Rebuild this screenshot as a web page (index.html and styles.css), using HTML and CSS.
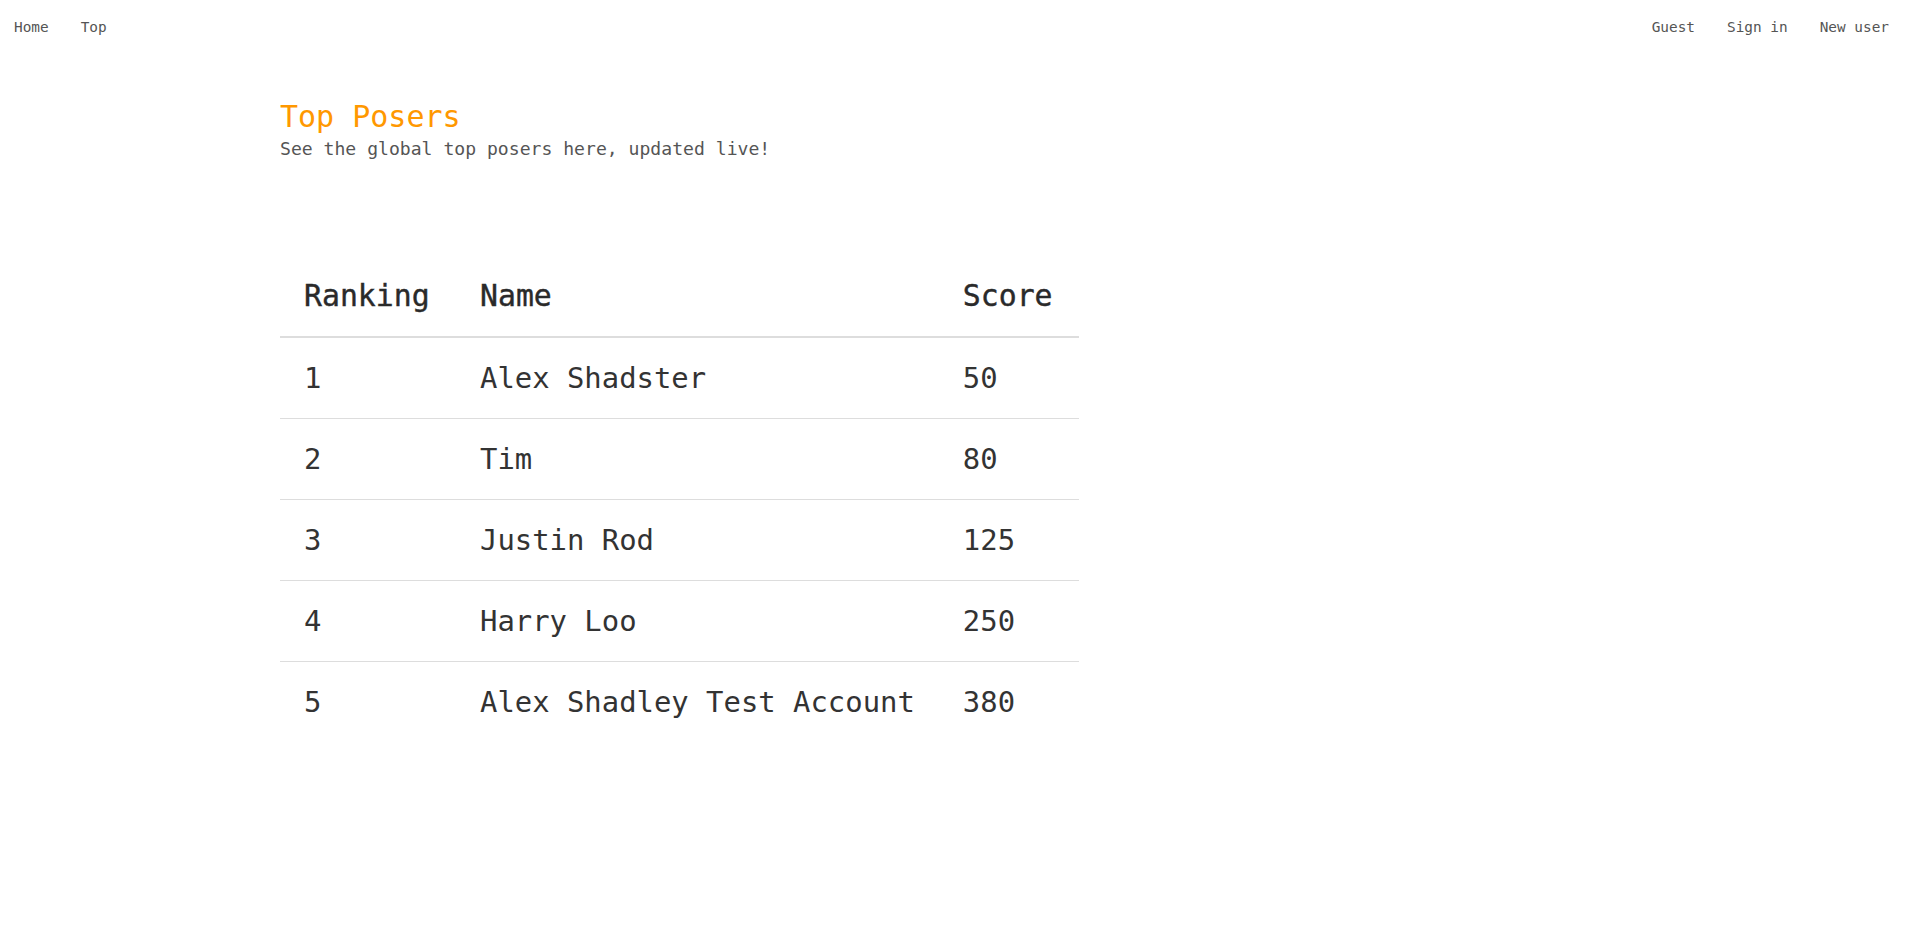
FILE: index.html
```html
<!DOCTYPE html>
<html lang="en">
<head>
<meta charset="utf-8">
<title>Top Posers</title>
<link rel="stylesheet" href="styles.css">
</head>
<body>
<nav class="topnav">
  <div class="nav-left">
    <a class="nav-link" href="#">Home</a>
    <a class="nav-link" href="#">Top</a>
  </div>
  <div class="nav-right">
    <span class="nav-link">Guest</span>
    <a class="nav-link" href="#">Sign in</a>
    <a class="nav-link" href="#">New user</a>
  </div>
</nav>
<main class="content">
  <h1 class="page-title">Top Posers</h1>
  <p class="page-sub">See the global top posers here, updated live!</p>
  <table class="ranking">
    <thead>
      <tr>
        <th class="col-rank">Ranking</th>
        <th class="col-name">Name</th>
        <th class="col-score">Score</th>
      </tr>
    </thead>
    <tbody>
      <tr><td>1</td><td>Alex Shadster</td><td>50</td></tr>
      <tr><td>2</td><td>Tim</td><td>80</td></tr>
      <tr><td>3</td><td>Justin Rod</td><td>125</td></tr>
      <tr><td>4</td><td>Harry Loo</td><td>250</td></tr>
      <tr><td>5</td><td>Alex Shadley Test Account</td><td>380</td></tr>
    </tbody>
  </table>
</main>
</body>
</html>
```
FILE: styles.css
```css
html, body {
  margin: 0;
  padding: 0;
  background: #ffffff;
}
body {
  font-family: "DejaVu Sans Mono", "Liberation Mono", monospace;
  color: #333333;
}
.topnav {
  display: flex;
  justify-content: space-between;
  align-items: center;
  padding: 17px 29px 0 14px;
  height: 20px;
}
.nav-left, .nav-right {
  display: flex;
  gap: 32px;
}
.nav-link {
  font-size: 14.4px;
  line-height: 20px;
  color: #555555;
  text-decoration: none;
}
.content {
  padding: 61px 0 0 280px;
}
.page-title {
  margin: 0;
  font-size: 30px;
  line-height: 38px;
  font-weight: normal;
  color: #ff9800;
}
.page-sub {
  margin: 2px 0 0 0;
  font-size: 18.1px;
  line-height: 22px;
  color: #555555;
}
.ranking {
  margin-top: 96px;
  border-collapse: separate;
  border-spacing: 0;
  font-size: 28.9px;
  line-height: 32px;
  color: #333333;
}
.ranking th,
.ranking td {
  padding: 24px;
  text-align: left;
  white-space: nowrap;
}
.ranking th {
  font-size: 29.8px;
  font-weight: normal;
  color: #2a2a2a;
  -webkit-text-stroke: 0.4px #2a2a2a;
  border-bottom: 2px solid #dddddd;
}
.ranking td {
  border-bottom: 1px solid #dddddd;
  font-weight: normal;
}
.ranking tbody tr:last-child td {
  border-bottom: none;
}
.col-rank {
  width: 128px;
}
.col-score {
  width: 92px;
}
```
